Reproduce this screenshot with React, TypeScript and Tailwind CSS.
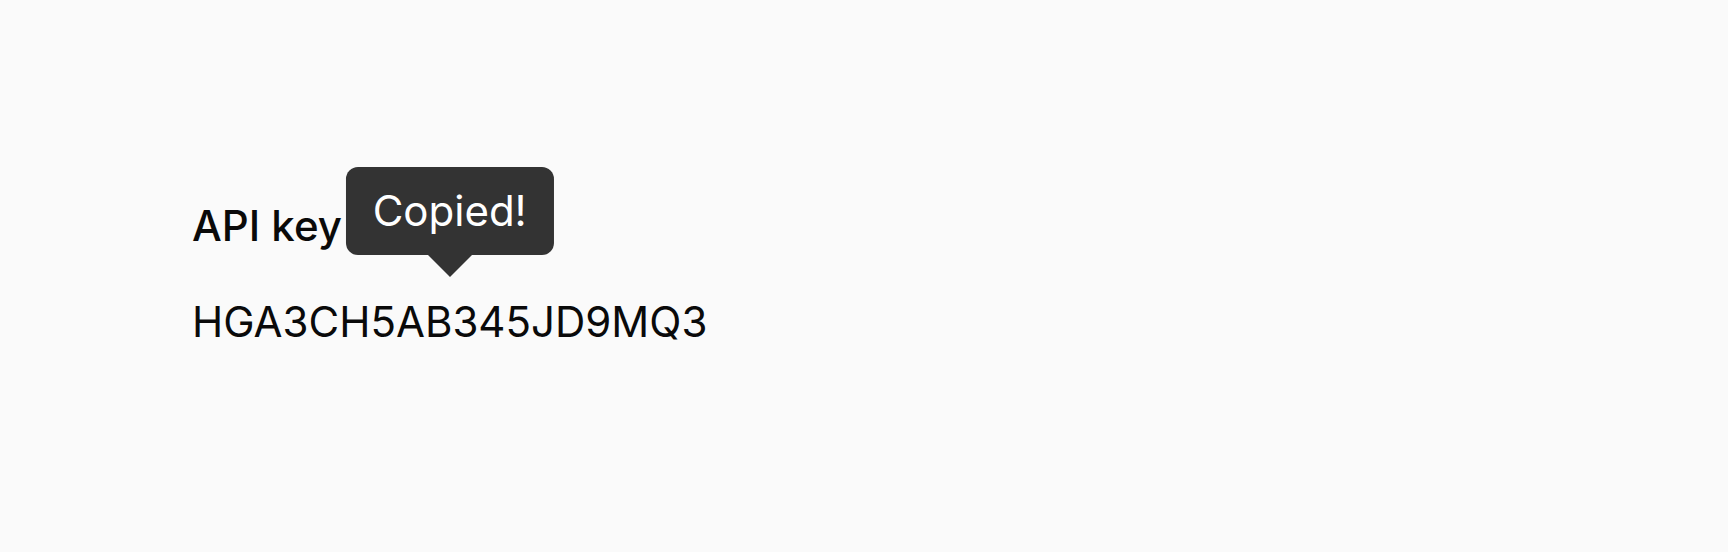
import { useState } from "react";

const API_KEY = "HGA3CH5AB345JD9MQ3";

function Tooltip({ label }: { label: string }) {
  return (
    <span
      role="status"
      className="absolute bottom-full left-1/2 mb-[43px] -translate-x-1/2 rounded-xl bg-[#333333] px-[27px] py-5 text-[42px] leading-12 whitespace-nowrap text-white"
    >
      {label}
      <svg
        viewBox="0 0 44 22"
        className="absolute top-full left-1/2 h-[22px] w-11 -translate-x-1/2"
        aria-hidden="true"
      >
        <path d="M0 0h44L22 22z" fill="#333333" />
      </svg>
    </span>
  );
}

export default function App() {
  const [copied, setCopied] = useState(true);

  const copy = () => {
    navigator.clipboard?.writeText(API_KEY);
    setCopied(true);
  };

  return (
    <main className="flex min-h-screen flex-col items-start bg-[#fafafa] px-48 pt-[202px] font-['Inter',sans-serif] text-neutral-950">
      <h2 id="api-key-label" className="text-[42px] leading-12 font-medium">
        API key
      </h2>
      <button
        type="button"
        aria-describedby="api-key-label"
        onClick={copy}
        className="relative mt-12 cursor-pointer text-[42px] leading-12"
      >
        {API_KEY}
        {copied && <Tooltip label="Copied!" />}
      </button>
    </main>
  );
}
